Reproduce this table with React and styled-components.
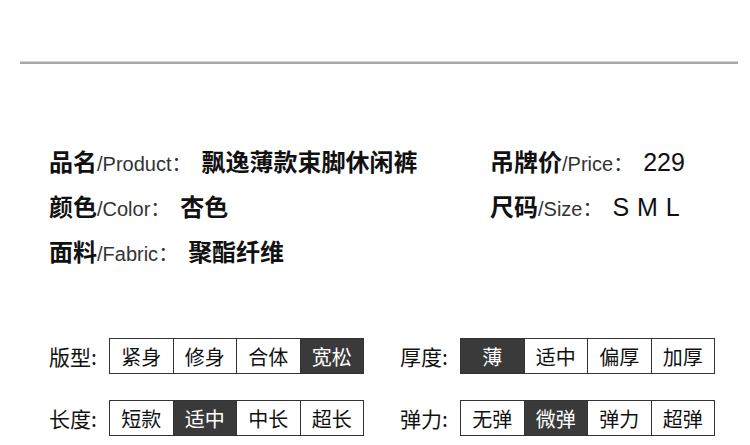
import React from 'react'
import styled, { createGlobalStyle } from 'styled-components'

const GlobalStyle = createGlobalStyle`
  body {
    margin: 0;
    background: #fff;
    font-family: "Liberation Sans", "Noto Sans CJK SC", sans-serif;
    color: #111;
  }
`

const Page = styled.div`
  width: 750px;
  height: 445px;
  padding: 61px 12px 0 20px;
  box-sizing: border-box;
  overflow: hidden;
`

const Rule = styled.div`
  height: 2px;
  background: #a8a8a8;
  border-top: 1px solid #d4d4d4;
`

const Info = styled.div`
  display: grid;
  grid-template-columns: 441px auto;
  grid-auto-rows: 45px;
  margin-top: 74px;
  padding-left: 29px;
`

const InfoRow = styled.div`
  display: flex;
  align-items: baseline;
  padding-top: 5px;
  white-space: nowrap;
`

const Key = styled.span`
  font-family: "Noto Sans CJK SC", sans-serif;
  font-weight: 700;
  font-size: 24px;
  color: #111;
`

const Eng = styled.span`
  font-family: "Liberation Sans", sans-serif;
  font-size: 20px;
  color: #333;
`

const Colon = styled.span`
  font-family: "Noto Sans CJK SC", sans-serif;
  font-size: 20px;
  color: #333;
  margin-right: 10px;
`

const Value = styled.span`
  font-family: ${p => (p.$latin ? '"Liberation Sans"' : '"Noto Sans CJK SC"')}, sans-serif;
  font-weight: ${p => (p.$latin ? 400 : 700)};
  font-size: ${p => (p.$latin ? '25px' : '24px')};
  word-spacing: ${p => (p.$latin ? '1px' : '0')};
  color: #111;
`

const Options = styled.div`
  display: grid;
  grid-template-columns: 351px auto;
  row-gap: 26px;
  margin-top: 65px;
  padding-left: 29px;
`

const Group = styled.div`
  display: flex;
  align-items: center;
`

const GroupLabel = styled.span`
  width: 60px;
  font-family: "Noto Sans CJK SC", sans-serif;
  font-size: 21px;
  color: #111;
  white-space: nowrap;
`

const Boxes = styled.div`
  display: grid;
  grid-template-columns: repeat(4, 63.5px);
  border-top: 1px solid #333;
  border-left: 1px solid #333;
`

const Box = styled.div`
  height: 34px;
  display: flex;
  align-items: center;
  justify-content: center;
  border-right: 1px solid #333;
  border-bottom: 1px solid #333;
  font-family: "Noto Sans CJK SC", sans-serif;
  font-size: 20px;
  background: ${p => (p.$on ? '#3a3a3a' : '#fff')};
  color: ${p => (p.$on ? '#fff' : '#111')};
`

const info = [
  { key: '品名', eng: '/Product', value: '飘逸薄款束脚休闲裤' },
  { key: '吊牌价', eng: '/Price', value: '229', latin: true },
  { key: '颜色', eng: '/Color', value: '杏色' },
  { key: '尺码', eng: '/Size', value: 'S M L', latin: true },
  { key: '面料', eng: '/Fabric', value: '聚酯纤维' },
]

const options = [
  { label: '版型:', items: ['紧身', '修身', '合体', '宽松'], on: 3 },
  { label: '厚度:', items: ['薄', '适中', '偏厚', '加厚'], on: 0 },
  { label: '长度:', items: ['短款', '适中', '中长', '超长'], on: 1 },
  { label: '弹力:', items: ['无弹', '微弹', '弹力', '超弹'], on: 1 },
]

export default function App() {
  return (
    <>
      <GlobalStyle />
      <Page>
        <Rule />
        <Info>
          {info.map(row => (
            <InfoRow key={row.key}>
              <Key>{row.key}</Key>
              <Eng>{row.eng}</Eng>
              <Colon>：</Colon>
              <Value $latin={row.latin}>{row.value}</Value>
            </InfoRow>
          ))}
        </Info>
        <Options>
          {options.map(group => (
            <Group key={group.label}>
              <GroupLabel>{group.label}</GroupLabel>
              <Boxes>
                {group.items.map((item, i) => (
                  <Box key={item} $on={i === group.on}>{item}</Box>
                ))}
              </Boxes>
            </Group>
          ))}
        </Options>
      </Page>
    </>
  )
}
